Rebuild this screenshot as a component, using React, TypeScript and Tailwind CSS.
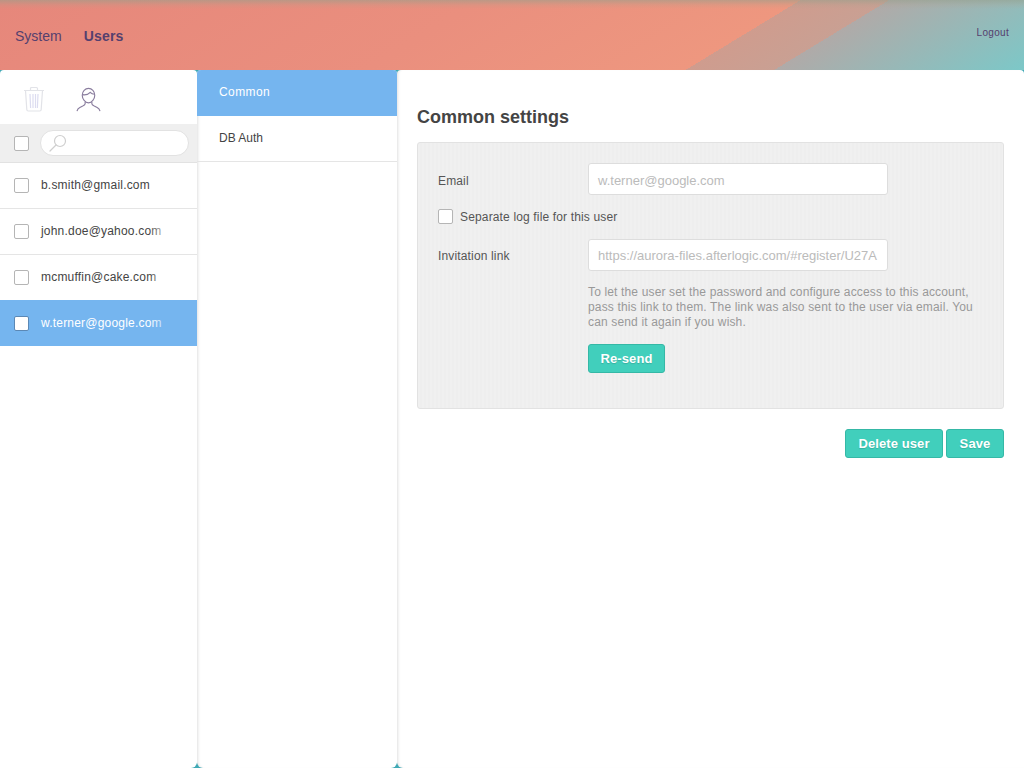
const users = ["b.smith@gmail.com", "john.doe@yahoo.com", "mcmuffin@cake.com", "w.terner@google.com"];

function TrashIcon() {
  return (
    <svg width="22" height="26" viewBox="0 0 22 26" fill="none" stroke="#e2e3e8" strokeWidth="1.2">
      <path d="M1 4.500h20M7.500 4.500V2.500q0-1 1-1h5q1 0 1 1v2" />
      <path d="M2.500 4.500l1.300 19q0 1.500 1.500 1.500h11.400q1.500 0 1.500-1.500l1.300-19" />
      <path d="M7 8l.6 14M10 8v14M12.500 8v14M15 8l-.6 14" stroke="#dcdcf0" />
    </svg>
  );
}

function UserIcon() {
  return (
    <svg width="25" height="25" viewBox="0 0 26 26" fill="none" stroke="#8a7d9e" strokeWidth="1.2">
      <path d="M6.500 8.500c0-4 3-7 6.500-7s6.500 3 6.500 7c0 4-3 8-6.500 8s-6.500-4-6.500-8z" />
      <path d="M6.800 8c3 .5 6-.3 8-2.500 1 1 2.500 1.800 4.500 2" />
      <path d="M9.500 15.500v1.800c0 1-1 1.700-2.500 2.500l-3 1.500c-1.500.8-2.500 2-3 3.700M16.500 15.500v1.800c0 1 1 1.700 2.500 2.500l3 1.500c1.500.8 2.500 2 3 3.700" />
    </svg>
  );
}

function SearchIcon() {
  return (
    <svg width="18" height="18" viewBox="0 0 18 18" fill="none" stroke="#cfcfcf" strokeWidth="1.2">
      <circle cx="11" cy="7" r="5.500" />
      <path d="M7 11l-6 6" strokeLinecap="round" />
    </svg>
  );
}

function Check({ className = "border-[#b5b5b5]" }: { className?: string }) {
  return <div className={`w-[15px] h-[15px] shrink-0 bg-white border rounded-[2px] ${className}`} />;
}

function Btn({ label, className = "" }: { label: string; className?: string }) {
  return (
    <button className={`h-[29px] bg-[#41cfbc] border border-[#35b8a6] rounded-[3px] text-white font-bold text-[13px] leading-none tracking-[0.1px] [text-shadow:0_1px_1px_rgba(0,0,0,0.15)] ${className}`}>
      {label}
    </button>
  );
}

export default function App() {
  return (
    <div className="h-[768px] w-[1024px] overflow-hidden flex flex-col bg-[#3fa9b5] font-['Liberation_Sans',Arial,sans-serif]">
      <header className="h-[70px] shrink-0 flex justify-between bg-[linear-gradient(180deg,rgba(150,160,140,0.55)_0px,rgba(170,160,140,0.2)_5px,rgba(0,0,0,0)_9px),linear-gradient(148.700deg,#e6877b_0px,#ea8f7e_250px,#ee977f_416px,#cf9c8e_416px,#c9a093_462px,#b0aaa8_462px,#7cc8c8_592px)]">
        <nav className="flex items-start gap-[22px] pl-[15px] pt-[28px] text-[14px] leading-4 text-[#55406e]">
          <span>System</span>
          <span className="font-bold tracking-[0.2px]">Users</span>
        </nav>
        <span className="pt-[27px] pr-[15px] text-[10px] leading-3 tracking-[0.3px] text-[#55406e]">Logout</span>
      </header>

      <div className="flex-1 flex min-h-0">
        <aside className="w-[197px] bg-white rounded-t-[4px] rounded-br-[6px]">
          <div className="h-[54px] flex items-center pl-[23px] gap-[31px] pt-[4px]">
            <TrashIcon />
            <UserIcon />
          </div>
          <div className="h-[39px] bg-[#efefef] border-b border-[#e2e2e2] flex items-center pl-[14px] pr-[8px] gap-[11px]">
            <Check />
            <div className="flex-1 h-[26px] bg-white border border-[#e2e2e2] rounded-[13px] flex items-center pl-[8px]">
              <SearchIcon />
            </div>
          </div>
          {users.map((u, i) => {
            const active = i === 3;
            return (
              <div
                key={u}
                className={`h-[46px] flex items-center pl-[14px] gap-[12px] text-[12px] ${
                  active ? "-mt-px bg-[#75b5ef] text-white" : "border-b border-[#e5e5e5] text-[#444]"
                }`}
              >
                <Check className={active ? "border-[#5b88b5]" : "border-[#b5b5b5]"} />
                <span className={`relative w-[124px] tracking-[0.2px] ${active ? "" : "pb-[2px]"}`}>
                  {u}
                  <span
                    className={`absolute right-0 top-0 bottom-0 w-[16px] ${
                      active
                        ? "bg-[linear-gradient(90deg,rgba(117,181,239,0),rgba(117,181,239,0.5))]"
                        : "bg-[linear-gradient(90deg,rgba(255,255,255,0),rgba(255,255,255,0.7))]"
                    }`}
                  />
                </span>
              </div>
            );
          })}
        </aside>

        <aside className="w-[200px] bg-white rounded-t-[4px] rounded-b-[6px] shadow-[inset_3px_0_3px_-2px_rgba(0,0,0,0.12)] overflow-hidden text-[12px]">
          <div className="h-[46px] bg-[#75b5ef] text-white flex items-center pl-[22px] pb-[2px] tracking-[0.4px]">Common</div>
          <div className="h-[46px] border-b border-[#e5e5e5] text-[#444] flex items-center pl-[22px] pb-[2px]">DB Auth</div>
        </aside>

        <main className="flex-1 bg-white rounded-t-[4px] rounded-bl-[6px] shadow-[inset_3px_0_3px_-2px_rgba(0,0,0,0.12)] px-[20px] pt-[36px]">
          <h1 className="text-[18px] leading-[22px] font-bold text-[#444]">Common settings</h1>
          <section className="mt-[14px] h-[267px] bg-[repeating-linear-gradient(90deg,#f0f0f0_0px,#f0f0f0_2px,#eeeeee_2px,#eeeeee_4px)] border border-[#e2e2e2] rounded-[3px] pl-[20px] pt-[20px] text-[12px] tracking-[0.15px] text-[#555]">
            <div className="flex items-center">
              <label className="w-[150px] pt-[3px]">Email</label>
              <div className="w-[300px] h-[32px] bg-white border border-[#ddd] rounded-[3px] flex items-center pl-[9px] pt-[3px] text-[13px] tracking-normal text-[#bbb]">
                w.terner@google.com
              </div>
            </div>
            <div className="flex items-center gap-[7px] mt-[14px] h-[15px]">
              <Check />
              <span>Separate log file for this user</span>
            </div>
            <div className="flex items-center mt-[15px]">
              <label className="w-[150px] pt-[2px]">Invitation link</label>
              <div className="w-[300px] h-[32px] bg-white border border-[#ddd] rounded-[3px] flex items-center pl-[9px] pt-[2px] text-[13px] tracking-normal text-[#bbb] overflow-hidden whitespace-nowrap">
                https://aurora-files.afterlogic.com/#register/U27A
              </div>
            </div>
            <div className="ml-[150px] mt-[14px] w-[395px]">
              <p className="text-[12px] leading-[15px] text-[#999]">
                To let the user set the password and configure access to this account, pass this link to them. The link was also sent to the user via email. You can send it again if you wish.
              </p>
              <Btn label="Re-send" className="w-[77px] mt-[14px]" />
            </div>
          </section>
          <div className="flex justify-end gap-[3px] mt-[20px]">
            <Btn label="Delete user" className="w-[98px]" />
            <Btn label="Save" className="w-[58px]" />
          </div>
        </main>
      </div>
    </div>
  );
}
